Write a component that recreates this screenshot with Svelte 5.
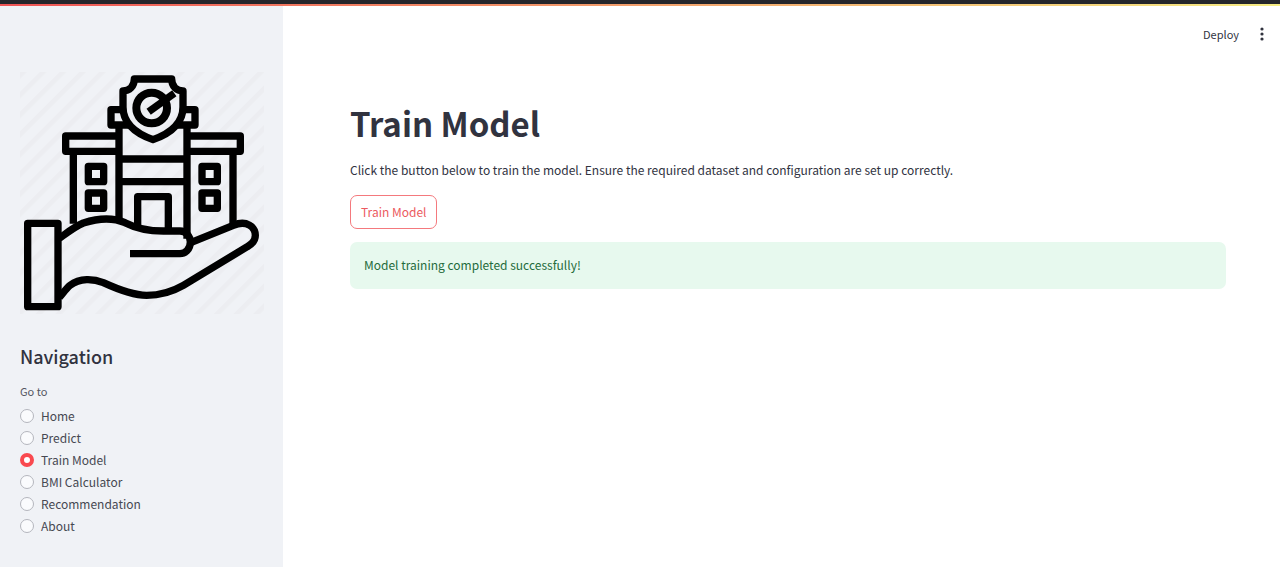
<script>
  const pages = ['Home', 'Predict', 'Train Model', 'BMI Calculator', 'Recommendation', 'About'];
  let page = $state('Train Model');
</script>

<div class="app">
  <div class="strip"></div>
  <div class="body">
    <aside class="sidebar">
      <svg class="logo" viewBox="0 0 732 732" role="img" aria-label="Insurance emblem">
        <defs>
          <pattern id="stripes" width="42" height="42" patternUnits="userSpaceOnUse" patternTransform="rotate(45)">
            <rect width="14" height="42" fill="#ecedf1" />
          </pattern>
        </defs>
        <rect width="732" height="726" fill="url(#stripes)" />
        <g transform="translate(-60 -35)" fill="none" stroke="#000" stroke-width="22" stroke-linejoin="round">
          <path d="M357 227H197V273H357M561 227H721V273H561" />
          <path d="M357 190V478M561 190V535M220 273V490M699 273V492M357 296H561M357 364H561" />
          <path d="M265 318H311V364H265ZM265 398H311V444H265ZM606 318H652V364H606ZM606 398H652V444H606Z" />
          <path d="M413 494V409H505V508" />
          <path d="M366 148H333V194H384M552 148H585V194H534" />
          <path d="M403 56H515C515 78 530 92 549 92V140C549 185 515 218 459 238C403 218 369 185 369 140V92C388 92 403 78 403 56Z" />
          <circle cx="455" cy="143" r="46" stroke-width="24" />
          <path d="M446 154L523 99" />
          <path d="M83 489H174V739H83Z" />
          <path d="M178 534C200 518 225 498 250 488C300 472 345 474 375 487C410 505 450 512 490 512H540C558 512 571 528 571 545C571 568 555 580 540 580H390" />
          <path d="M574 546L700 495C740 478 766 500 766 525C766 540 755 552 742 559L550 675C510 698 475 705 440 705C400 705 360 690 310 667C280 655 240 652 210 675C200 683 190 697 178 711" />
        </g>
      </svg>
      <h2>Navigation</h2>
      <fieldset>
        <legend>Go to</legend>
        {#each pages as name}
          <label><input type="radio" name="page" value={name} bind:group={page} />{name}</label>
        {/each}
      </fieldset>
    </aside>
    <div class="content">
      <header>
        <button class="deploy" type="button">Deploy</button>
        <button class="menu" type="button" aria-label="Main menu">
          <svg viewBox="0 0 16 16" fill="currentColor"><circle cx="8" cy="3" r="1.6" /><circle cx="8" cy="8" r="1.6" /><circle cx="8" cy="13" r="1.6" /></svg>
        </button>
      </header>
      <main>
        <h1>Train Model</h1>
        <p>Click the button below to train the model. Ensure the required dataset and configuration are set up correctly.</p>
        <button class="train" type="button">Train Model</button>
        <div class="alert" role="status">Model training completed successfully!</div>
      </main>
    </div>
  </div>
</div>

<style>
  :global(body) {
    margin: 0;
    background: #fff;
  }
  .app {
    min-height: 100vh;
    display: flex;
    flex-direction: column;
    color: #31333f;
    font: 12px/22px 'Noto Sans CJK SC', 'Noto Sans', sans-serif;
  }
  .strip {
    height: 2px;
    border-top: 4px solid #25262b;
    background: linear-gradient(90deg, #ef5455, #f5eb83);
  }
  .body {
    flex: 1;
    display: flex;
  }
  .sidebar {
    width: 283px;
    box-sizing: border-box;
    flex: none;
    padding: 66px 19px 24px 20px;
    background: #f0f2f6;
  }
  .logo {
    display: block;
    width: 100%;
  }
  h2 {
    margin: 26px 0 12px;
    font-size: 18px;
    line-height: 28px;
    font-weight: 500;
  }
  fieldset {
    margin: 0;
    padding: 0;
    border: 0;
    min-width: 0;
  }
  legend {
    padding: 0 0 5px;
    font-size: 11px;
    line-height: 18px;
    color: #555762;
  }
  label {
    display: flex;
    align-items: center;
    gap: 7px;
    width: max-content;
    color: #464852;
    cursor: pointer;
  }
  input {
    appearance: none;
    box-sizing: border-box;
    width: 14px;
    height: 14px;
    margin: 0;
    border: 1px solid #b4b6bd;
    border-radius: 50%;
    background: #fafbfd;
  }
  input:checked {
    border: 4px solid #f9494f;
    background: #fff;
  }
  .content {
    flex: 1;
    min-width: 0;
  }
  header {
    display: flex;
    justify-content: flex-end;
    align-items: center;
    gap: 15px;
    height: 56px;
    padding-right: 10px;
  }
  button {
    font: inherit;
    color: inherit;
    background: none;
    border: 0;
    padding: 0;
    cursor: pointer;
  }
  .deploy {
    font-size: 11px;
  }
  .menu {
    display: flex;
  }
  .menu svg {
    width: 16px;
    height: 16px;
  }
  main {
    padding: 38px 54px 40px 67px;
  }
  h1 {
    margin: 0 0 13px;
    font-size: 33px;
    line-height: 46px;
    font-weight: 700;
  }
  p {
    margin: 0 0 14px;
  }
  .train {
    display: block;
    height: 34px;
    margin-bottom: 13px;
    padding: 0 10px;
    border: 1px solid #f4797d;
    border-radius: 7px;
    color: #ec5a60;
  }
  .alert {
    padding: 12px 14px 13px;
    border-radius: 7px;
    background: #e7f9ee;
    color: #246b3c;
  }
</style>
